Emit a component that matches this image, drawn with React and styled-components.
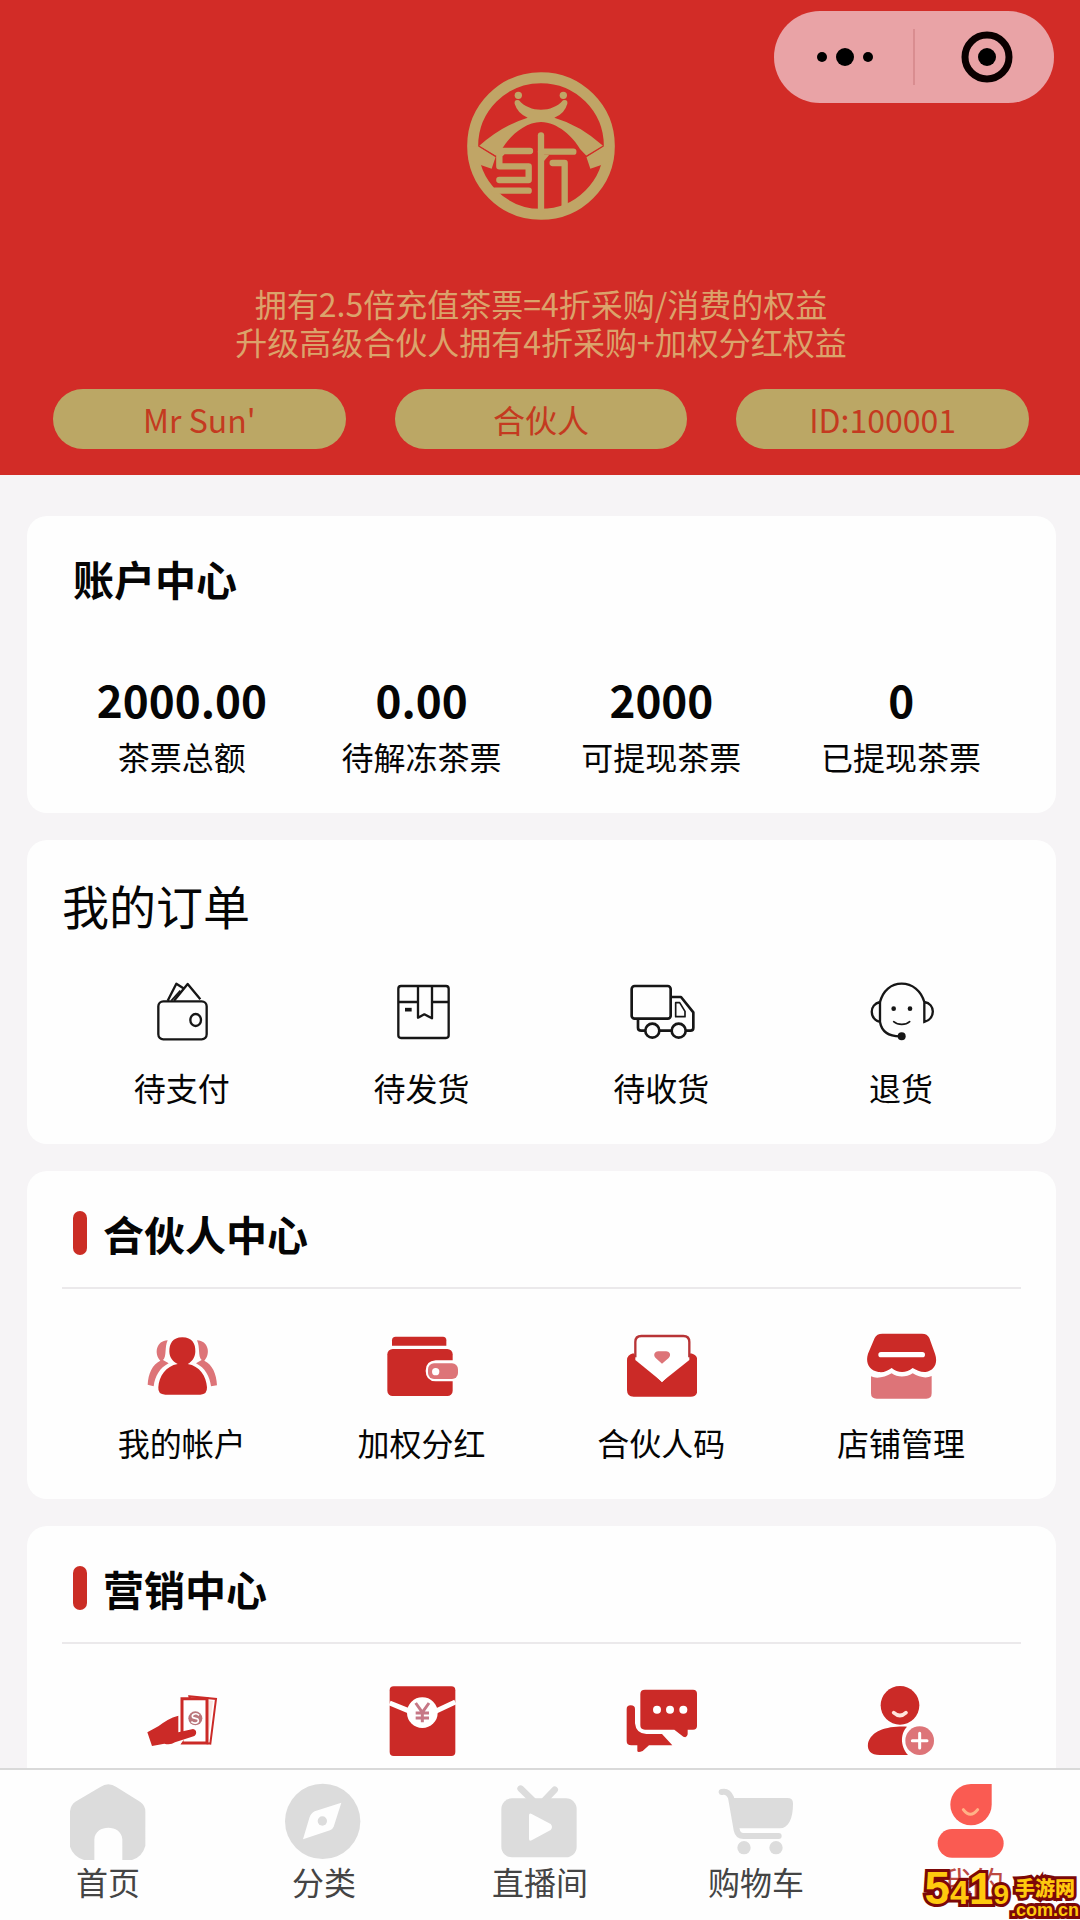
import React, { useState } from "react";
import styled, { createGlobalStyle } from "styled-components";

const GlobalStyle = createGlobalStyle`
  * {
    box-sizing: border-box;
  }

  body {
    margin: 0;
    background: #f6f4f6;
    font-family: "Noto Sans CJK SC", "Noto Sans", sans-serif;
    color: #050505;
  }

  button {
    padding: 0;
    border: 0;
    background: none;
    font: inherit;
    color: inherit;
    cursor: pointer;
  }
`;

const Screen = styled.div`
  position: relative;
  display: flex;
  flex-direction: column;
  height: 100vh;
  overflow: hidden;
`;

const Scroller = styled.div`
  flex: 1;
  min-height: 0;
  overflow-y: auto;
  scrollbar-width: none;
`;

const Header = styled.header`
  position: relative;
  display: flex;
  flex-direction: column;
  align-items: center;
  padding: 71px 51px 26px 53px;
  background: #d22c27;
`;

const Capsule = styled.div`
  position: absolute;
  top: 11px;
  right: 26px;
  display: flex;
  align-items: center;
  width: 280px;
  height: 92px;
  border-radius: 46px;
  background: #e9a3a6;
`;

const CapsuleButton = styled.button`
  flex: 1;
  height: 56px;
  display: flex;
  align-items: center;
  justify-content: center;

  & + & {
    padding-left: 5px;
    border-left: 2px solid #d98d90;
  }

  &:first-child {
    padding-left: 4px;
  }
`;

const Slogan = styled.p`
  margin: 63px 0 29px;
  font-size: 32px;
  line-height: 38px;
  text-align: center;
  color: #dba36b;
`;

const Pills = styled.div`
  display: grid;
  grid-template-columns: repeat(3, 1fr);
  gap: 49px;
  width: 100%;
`;

const Pill = styled.span`
  border-radius: 30px;
  background: #bba765;
  color: #c43a20;
  font-size: 32px;
  line-height: 60px;
  text-align: center;
`;

const Main = styled.main`
  display: flex;
  flex-direction: column;
  gap: 27px;
  padding: 41px 24px 27px 27px;
`;

const Card = styled.section`
  padding: 38px 35px 37px;
  border-radius: 20px;
  background: #fefefe;
`;

const CardTitle = styled.h2`
  display: flex;
  align-items: center;
  gap: 16px;
  margin: 0;
  padding-left: 11px;
  font-size: 41px;
  line-height: 48px;
  font-weight: 700;
`;

const PlainTitle = styled.h2`
  margin: 0;
  font-size: 47px;
  line-height: 54px;
  font-weight: 400;
`;

const Marker = styled.span`
  width: 14px;
  height: 44px;
  border-radius: 7px;
  background: #cb2d25;
`;

const Divider = styled.hr`
  margin: 30px 0 0;
  border: 0;
  border-top: 2px solid #ebe9eb;
`;

const Grid = styled.div`
  display: grid;
  grid-template-columns: repeat(4, 1fr);
  margin-top: ${(props) => props.$top}px;
`;

const Cell = styled.button`
  display: flex;
  flex-direction: column;
  align-items: center;
  gap: ${(props) => props.$gap || 20}px;
`;

const Amount = styled.strong`
  font-size: 44px;
  line-height: 52px;
  font-weight: 700;
`;

const Label = styled.span`
  font-size: 32px;
  line-height: 40px;
`;

const TabBar = styled.nav`
  display: grid;
  grid-template-columns: repeat(5, 1fr);
  height: 152px;
  border-top: 2px solid #d9d9d9;
  background: #fefefe;
`;

const Tab = styled.button`
  display: flex;
  flex-direction: column;
  align-items: center;
  padding-top: 13px;
  color: ${(props) => (props.$active ? "#bd4a42" : "#444")};
`;

const Watermark = styled.div`
  position: absolute;
  right: 1px;
  bottom: 0;
  display: flex;
  align-items: flex-end;
  gap: 2px;
  font-weight: 900;
  color: #ffc90e;
  -webkit-text-stroke: 6px #7c0808;
  paint-order: stroke fill;
`;

const Digits = styled.span`
  display: flex;
  align-items: baseline;
  font-family: "Liberation Sans", sans-serif;
  line-height: 50px;
`;

const Digit = styled.span`
  font-size: ${(props) => props.$size}px;
`;

const Site = styled.span`
  display: flex;
  flex-direction: column;
  align-items: center;
  font-size: 20px;
  line-height: 24px;

  small {
    font-family: "Liberation Sans", sans-serif;
    font-size: 18px;
    line-height: 20px;
  }
`;

const RED = "#cb2a27";
const PINK = "#dd7478";
const GREY = "#dcdcdc";

// every drawing uses three units to the pixel
const Icon = ({ x, y, size = 72, children }) => (
  <svg width={size} height={size} viewBox={`${x} ${y} ${size * 3} ${size * 3}`} fill="none" aria-hidden="true">
    {children}
  </svg>
);

const Logo = () => (
  <svg width="150" height="150" viewBox="78 64 450 450" fill="#c0a566" role="img" aria-label="logo">
    <circle cx="303" cy="289" r="205" fill="none" stroke="#c0a566" strokeWidth="33" />
    <circle cx="235" cy="137" r="11" />
    <circle cx="370" cy="137" r="11" />
    <path d="M224 162Q222 148 237 152C268 190 338 190 369 152Q384 148 382 162Q374 192 343 204Q420 226 490 289L440 319L420 298C400 262 352 217 303 217C254 217 206 262 186 298L168 319L117 289Q185 228 263 204Q232 190 224 162Z" />
    <path d="M85 290L116 290L167 321L155 357L122 346L86 330Z" />
    <path d="M521 290L490 290L439 321L451 357L484 346L520 330Z" />
    <path d="M116 289L168 321M490 289L438 321" fill="none" stroke="#d22c27" strokeWidth="4" />
    <g fill="none" stroke="#c0a566" strokeWidth="19" strokeLinecap="round" strokeLinejoin="round">
      <path d="M270 304H190L178 316V350H266V391H178" />
      <path d="M165 423H266" />
      <path d="M303 257V485" />
      <path d="M303 306H400" />
      <path d="M338 340H374V470" />
    </g>
    <path d="M312 315H328L312 334Z" />
  </svg>
);

const PayIcon = () => (
  <Icon x={75} y={45}>
    <g stroke="#161616" strokeWidth="7" strokeLinejoin="round">
      <rect x="112" y="124" width="145" height="114" rx="15" />
      <path d="M140 122L166 71L186 84M159 122L200 72L238 118" />
      <path d="M151 122L178 92" strokeWidth="5" />
      <ellipse cx="224" cy="180" rx="16" ry="18" />
    </g>
  </Icon>
);

const BoxIcon = () => (
  <Icon x={793} y={45}>
    <g stroke="#161616" strokeWidth="7" strokeLinejoin="round">
      <rect x="830" y="78" width="151" height="156" rx="8" />
      <path d="M830 126H889M931 126H981M889 78V173L908 163L931 175V78" />
      <path d="M850 149H870" strokeWidth="11" />
    </g>
  </Icon>
);

const TruckIcon = () => (
  <Icon x={132} y={45}>
    <g stroke="#161616" strokeWidth="8" strokeLinejoin="round">
      <rect x="152" y="78" width="117" height="98" rx="9" />
      <path d="M269 111H300L337 157V203Q337 212 328 212H315M271 212H236M192 212H181Q171 212 171 203V176" />
      <circle cx="214" cy="212" r="21" />
      <circle cx="293" cy="212" r="21" />
      <path d="M284 128H296L312 154V170H284Z" strokeWidth="5" />
    </g>
  </Icon>
);

const ServiceIcon = () => (
  <Icon x={852} y={45}>
    <g stroke="#161616" strokeWidth="7" strokeLinecap="round">
      <path d="M897 126C906 92 930 71 962 71C994 71 1020 92 1030 126V186C1064 176 1064 132 1030 126" />
      <path d="M897 126C864 134 864 176 897 186V126M897 186C902 214 920 229 957 229" />
      <path d="M938 185C951 196 974 196 986 185" strokeWidth="5" />
    </g>
    <circle cx="962" cy="229" r="12" fill="#161616" />
    <circle cx="938" cy="146" r="7" fill="#161616" />
    <circle cx="987" cy="146" r="7" fill="#161616" />
  </Icon>
);

const AccountIcon = () => (
  <Icon x={315} y={510}>
    <path
      fill={PINK}
      d="M380 541C346 542 338 581 358 602C334 614 322 640 320 674L338 679C342 648 356 624 383 610L366 600C378 590 370 562 380 541ZM468 541C502 542 510 581 490 602C514 614 526 640 528 676L510 679C506 648 492 624 465 610L482 600C470 590 478 562 468 541Z"
    />
    <path
      fill={RED}
      d="M424 532C454 532 464 552 463 575C462 594 452 605 440 612C476 618 496 648 498 682Q499 704 478 704H373Q350 704 352 682C354 648 375 618 410 612C396 604 386 594 385 575C385 552 394 532 424 532Z"
    />
  </Icon>
);

const WalletIcon = () => (
  <Icon x={1033} y={510}>
    <path fill={RED} d="M1051 557V541Q1051 530 1062 530H1204Q1214 530 1214 541V557Z" />
    <rect x="1037" y="567" width="196" height="141" rx="16" fill={RED} />
    <path d="M1238 601H1182Q1152 603 1152 632Q1152 662 1182 664H1238Z" fill="#fff" />
    <rect x="1159" y="610" width="90" height="47" rx="18" fill={PINK} />
    <circle cx="1182" cy="635" r="11" fill="#fff" />
  </Icon>
);

const LetterIcon = () => (
  <Icon x={132} y={60}>
    <path fill={RED} d="M157 130Q138 134 138 151V240Q138 260 158 260H329Q349 260 349 240V151Q349 134 329 130L243 217Z" />
    <path d="M163 150V96Q163 78 181 78H307Q325 78 325 96V150L243 215Z" fill="#fff" />
    <path d="M163 142V96Q163 78 181 78H307Q325 78 325 96V142" stroke="#b83436" strokeWidth="7" />
    <path d="M243 161L224 144C213 132 226 121 234 124H252C262 121 274 132 263 144Z" fill={PINK} />
  </Icon>
);

const ShopIcon = () => (
  <Icon x={852} y={60}>
    <path fill={PINK} d="M870 199C886 207 912 202 932 190C950 203 975 203 995 190C1015 202 1036 206 1052 198V250Q1052 266 1036 266H887Q870 266 870 250Z" />
    <path fill={RED} d="M904 71H1023Q1039 71 1045 84L1062 131C1072 160 1059 181 1034 186C1017 187 1008 180 995 174C976 190 950 190 932 174C918 184 908 188 892 186C866 181 852 160 861 131L881 84Q887 71 904 71Z" />
    <path d="M900 134H1024" stroke="#fff" strokeWidth="16" strokeLinecap="round" />
  </Icon>
);

const CashIcon = () => (
  <Icon x={315} y={462}>
    <path d="M445 496L525 504L508 638L480 634Z" fill="#fff" stroke={RED} strokeWidth="6" />
    <path d="M502 508L516 510L503 612Z" fill="#fbe4df" />
    <path d="M423 503H498V636H423Z" fill="#fff" stroke={RED} strokeWidth="9" />
    <circle cx="463" cy="562" r="21" fill="#ba777c" />
    <path d="M474 553C464 543 448 552 456 560L470 564C478 573 462 582 451 572" stroke="#fff" strokeWidth="5" />
    <path d="M414 548V602L433 620L414 646V630L392 638Z" fill="#fff" />
    <path fill={RED} d="M319 604L352 586C370 571 389 560 412 554V604L456 594C469 596 468 613 458 616L402 634Q388 643 370 638L333 645Z" />
  </Icon>
);

const RedPacketIcon = () => (
  <Icon x={1033} y={462}>
    <rect x="1044" y="466" width="197" height="209" rx="12" fill={RED} />
    <path d="M1044 516L1100 539H1185L1241 513" stroke="#fff" strokeWidth="15" />
    <circle cx="1142" cy="545" r="46" fill="#fff" />
    <path d="M1122 516L1142 544L1162 516M1142 544V574M1122 546H1162M1122 561H1162" stroke="#c67786" strokeWidth="9" />
  </Icon>
);

const ChatIcon = () => (
  <Icon x={132} y={72}>
    <path fill={RED} d="M192 86H336Q348 86 348 98V195Q348 206 336 206H320V220Q318 232 307 227L280 206H192Q178 206 178 193V99Q178 86 192 86Z" />
    <path fill={RED} d="M137 144Q137 133 149 133Q162 133 162 144V187Q165 218 196 219H243L274 253H204L185 270Q170 276 169 270V253H151Q137 253 137 240Z" />
    <g fill="#fff">
      <circle cx="228" cy="146" r="12" />
      <circle cx="267" cy="146" r="12" />
      <circle cx="307" cy="146" r="12" />
    </g>
  </Icon>
);

const InviteIcon = () => (
  <Icon x={852} y={72}>
    <circle cx="957" cy="133" r="58" fill={RED} />
    <path d="M938 155Q957 172 975 155" stroke="#ffe4dc" strokeWidth="11" strokeLinecap="round" />
    <path fill={RED} d="M978 197C960 215 955 252 981 282H896C870 282 858 270 861 247C872 207 920 195 978 197Z" />
    <circle cx="1016" cy="239" r="43" fill={PINK} />
    <path d="M994 239H1038M1016 217V261" stroke="#fff" strokeWidth="9" strokeLinecap="round" />
  </Icon>
);

const HomeTabIcon = () => (
  <Icon x={87} y={759} size={78}>
    <path fill={GREY} d="M181 771Q205 755 229 771L300 815Q316 826 316 844V948Q306 982 276 990H247V928C244 882 166 882 163 928V990H132Q100 980 90 950V844Q92 825 106 815Z" />
  </Icon>
);

const CompassTabIcon = () => (
  <Icon x={735} y={759} size={78}>
    <circle cx="848" cy="874" r="113" fill={GREY} />
    <path d="M904 818L881 890Q878 897 870 901L789 928L808 864Q812 850 824 844Z" fill="#fefefe" />
    <circle cx="847" cy="873" r="14" fill={GREY} />
  </Icon>
);

const LiveTabIcon = () => (
  <Icon x={63} y={69} size={78}>
    <path d="M122 86L158 121M224 89L194 121" stroke={GREY} strokeWidth="20" strokeLinecap="round" />
    <rect x="64" y="115" width="226" height="177" rx="32" fill={GREY} />
    <path d="M147 166Q147 158 155 162L212 192Q220 201 212 210L155 241Q147 245 147 236Z" fill="#fefefe" />
  </Icon>
);

const CartTabIcon = () => (
  <Icon x={711} y={69} size={78}>
    <path fill={GREY} d="M752 114H922Q940 114 939 132C939 176 925 205 900 205H775Z" />
    <path d="M725 96Q744 91 753 113L770 210Q774 228 790 228H896" stroke={GREY} strokeWidth="18" strokeLinecap="round" />
    <circle cx="792" cy="263" r="20" fill={GREY} />
    <circle cx="888" cy="263" r="20" fill={GREY} />
  </Icon>
);

const MineTabIcon = () => (
  <Icon x={219} y={69} size={78}>
    <path fill="#fa5b52" d="M333 72H395V134A62 62 0 1 1 333 72Z" />
    <path d="M310 149Q331 177 353 149" stroke="#ffb287" strokeWidth="9" strokeLinecap="round" />
    <rect x="233" y="207" width="198" height="86" rx="43" fill="#fa5b52" />
  </Icon>
);

const accounts = [
  { value: "2000.00", label: "茶票总额" },
  { value: "0.00", label: "待解冻茶票" },
  { value: "2000", label: "可提现茶票" },
  { value: "0", label: "已提现茶票" },
];

const orders = [
  { icon: PayIcon, label: "待支付" },
  { icon: BoxIcon, label: "待发货" },
  { icon: TruckIcon, label: "待收货" },
  { icon: ServiceIcon, label: "退货" },
];

const partner = [
  { icon: AccountIcon, label: "我的帐户" },
  { icon: WalletIcon, label: "加权分红" },
  { icon: LetterIcon, label: "合伙人码" },
  { icon: ShopIcon, label: "店铺管理" },
];

const marketing = [
  { icon: CashIcon },
  { icon: RedPacketIcon },
  { icon: ChatIcon },
  { icon: InviteIcon },
];

const tabs = [
  { icon: HomeTabIcon, label: "首页" },
  { icon: CompassTabIcon, label: "分类" },
  { icon: LiveTabIcon, label: "直播间" },
  { icon: CartTabIcon, label: "购物车" },
  { icon: MineTabIcon, label: "我的" },
];

const IconGrid = ({ items, top = 41 }) => (
  <Grid $top={top}>
    {items.map(({ icon: ItemIcon, label }, i) => (
      <Cell key={i} type="button">
        <ItemIcon />
        {label && <Label>{label}</Label>}
      </Cell>
    ))}
  </Grid>
);

const App = () => {
  const [active, setActive] = useState("我的");

  return (
    <Screen>
      <GlobalStyle />
      <Scroller>
        <Header>
          <Capsule>
            <CapsuleButton type="button" aria-label="更多">
              <svg width="56" height="20" viewBox="0 0 56 20">
                <circle cx="5" cy="10" r="5" />
                <circle cx="28" cy="10" r="9" />
                <circle cx="51" cy="10" r="5" />
              </svg>
            </CapsuleButton>
            <CapsuleButton type="button" aria-label="关闭">
              <svg width="52" height="52" viewBox="0 0 52 52">
                <circle cx="26" cy="26" r="22" fill="none" stroke="#0a0000" strokeWidth="7" />
                <circle cx="26" cy="26" r="9" />
              </svg>
            </CapsuleButton>
          </Capsule>
          <Logo />
          <Slogan>
            拥有2.5倍充值茶票=4折采购/消费的权益
            <br />
            升级高级合伙人拥有4折采购+加权分红权益
          </Slogan>
          <Pills>
            <Pill>Mr Sun'</Pill>
            <Pill>合伙人</Pill>
            <Pill>ID:100001</Pill>
          </Pills>
        </Header>

        <Main>
          <Card>
            <CardTitle>账户中心</CardTitle>
            <Grid $top={71}>
              {accounts.map((item) => (
                <Cell key={item.label} type="button" $gap={11}>
                  <Amount>{item.value}</Amount>
                  <Label>{item.label}</Label>
                </Cell>
              ))}
            </Grid>
          </Card>

          <Card>
            <PlainTitle>我的订单</PlainTitle>
            <IconGrid items={orders} top={43} />
          </Card>

          <Card>
            <CardTitle>
              <Marker />
              合伙人中心
            </CardTitle>
            <Divider />
            <IconGrid items={partner} />
          </Card>

          <Card>
            <CardTitle>
              <Marker />
              营销中心
            </CardTitle>
            <Divider />
            <IconGrid items={marketing} />
          </Card>
        </Main>
      </Scroller>

      <TabBar>
        {tabs.map(({ icon: TabIcon, label }) => (
          <Tab key={label} type="button" $active={label === active} onClick={() => setActive(label)}>
            <TabIcon />
            <Label>{label}</Label>
          </Tab>
        ))}
      </TabBar>

      <Watermark>
        <Digits>
          <Digit $size={46}>5</Digit>
          <Digit $size={34}>4</Digit>
          <Digit $size={44}>1</Digit>
          <Digit $size={28}>9</Digit>
        </Digits>
        <Site>
          手游网
          <small>.com.cn</small>
        </Site>
      </Watermark>
    </Screen>
  );
};

export default App;
